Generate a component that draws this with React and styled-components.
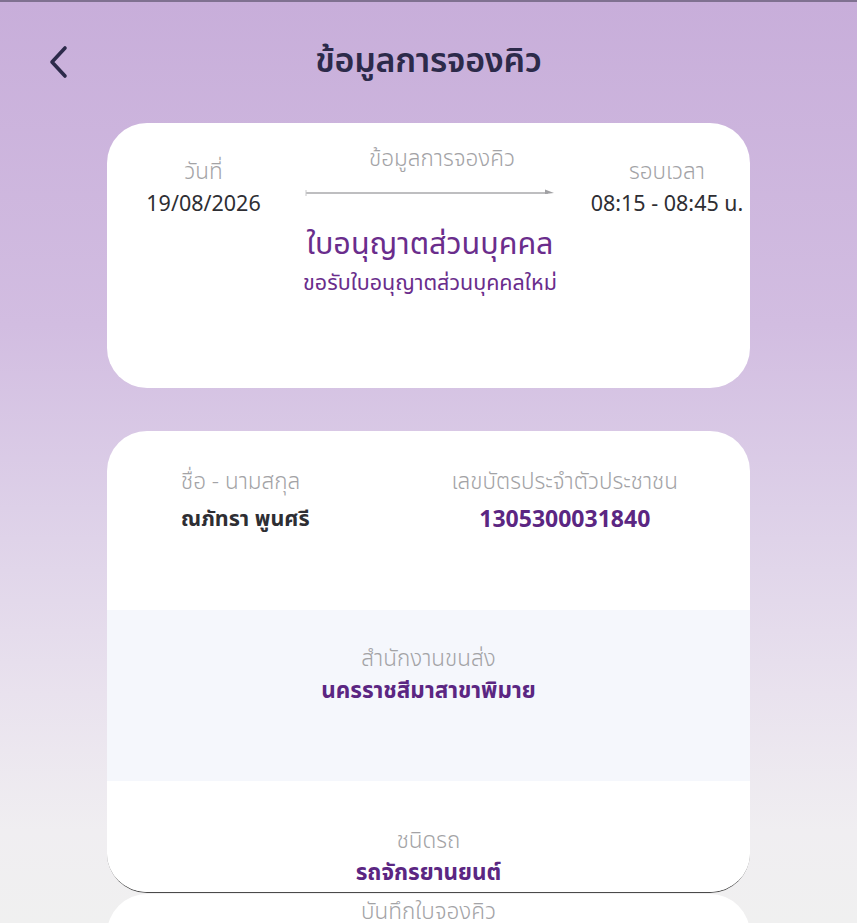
import React from "react";
import styled, { createGlobalStyle } from "styled-components";

const GlobalStyle = createGlobalStyle`
  html, body {
    margin: 0;
    padding: 0;
    background: #f0f0f0;
  }
  body {
    font-family: "Noto Sans Thai", "Noto Sans", "Liberation Sans", sans-serif;
  }
  * { box-sizing: border-box; }
`;

const Page = styled.div`
  min-height: 923px;
  height: 923px;
  overflow: hidden;
  border-top: 2px solid #7f7190;
  background: linear-gradient(
    180deg,
    #c8aeda 0%,
    #d2bde1 35%,
    #ddd0e8 55%,
    #e9e2ee 75%,
    #f0eef1 90%,
    #f0f0f0 100%
  );
`;

const Header = styled.header`
  display: grid;
  grid-template-columns: 1fr auto 1fr;
  align-items: center;
  height: 121px;
  padding: 0 46px;
`;

const BackButton = styled.button`
  width: 30px;
  height: 36px;
  padding: 0;
  border: none;
  background: none;
  display: flex;
  align-items: center;
  margin-top: -2px;
  cursor: pointer;
`;

const Title = styled.h1`
  margin: 0 0 2px;
  font-size: 34px;
  font-weight: 600;
  color: #2c2a4a;
  letter-spacing: -0.3px;
  line-height: 44px;
`;

const Cards = styled.div`
  display: flex;
  flex-direction: column;
  gap: 43px;
  padding: 0 107px;
`;

const Card = styled.section`
  background: #fff;
  border-radius: 40px;
  overflow: hidden;
`;

const SummaryCard = styled(Card)`
  height: 265px;
  display: grid;
  grid-template-columns: 193px 260px 1fr;
`;

const Side = styled.div`
  display: flex;
  flex-direction: column;
  align-items: center;
  padding-top: 35px;
  padding-left: ${(p) => p.$shift || 0}px;
`;

const Label = styled.div`
  font-size: 22.5px;
  color: #a3a3a6;
  font-weight: 300;
  line-height: 28px;
  white-space: nowrap;
`;

const Plain = styled.div`
  margin-top: 5px;
  font-size: 21.5px;
  color: #2e2e33;
  line-height: 28px;
  white-space: nowrap;
`;

const Middle = styled.div`
  display: flex;
  flex-direction: column;
  align-items: center;
  padding-top: 22px;
`;

const Heading = styled(Label)`
  padding-left: 24px;
`;

const Arrow = styled.svg`
  display: block;
  margin-top: 15px;
`;

const BigTitle = styled.div`
  margin-top: 28px;
  font-size: 30.5px;
  color: #6a2d8c;
  line-height: 38px;
  white-space: nowrap;
`;

const SubTitle = styled.div`
  margin-top: 6px;
  font-size: 21.5px;
  color: #6a2d8c;
  line-height: 28px;
  white-space: nowrap;
`;

const DetailCard = styled(Card)`
  border-bottom: 1px solid #4a4a4a;
`;

const PersonRow = styled.div`
  height: 179px;
  display: grid;
  grid-template-columns: 1fr auto;
  padding: 37px 72px 0 74px;
`;

const Field = styled.div`
  display: flex;
  flex-direction: column;
  align-items: ${(p) => (p.$center ? "center" : "flex-start")};
`;

const Strong = styled.div`
  margin-top: 10px;
  font-size: ${(p) => p.$size || 22.5}px;
  font-weight: 700;
  line-height: 28px;
  color: ${(p) => (p.$purple ? "#5b2682" : "#2e2e33")};
  white-space: nowrap;
`;

const Band = styled.div`
  height: ${(p) => p.$h}px;
  padding-top: ${(p) => p.$pad}px;
  background: ${(p) => (p.$tint ? "#f5f7fc" : "#fff")};
  display: flex;
  flex-direction: column;
  align-items: center;
`;

const TightStrong = styled(Strong)`
  margin-top: 4px;
`;

const NextCard = styled(Card)`
  height: 120px;
  margin-top: -42px;
  display: flex;
  justify-content: center;
  padding-top: 4px;
`;

export default function App() {
  return (
    <>
      <GlobalStyle />
      <Page>
        <Header>
          <BackButton aria-label="back">
            <svg width="24" height="34" viewBox="0 0 24 34">
              <polyline
                points="19,3 6,17 19,31"
                fill="none"
                stroke="#2c2a4a"
                strokeWidth="3.6"
                strokeLinecap="round"
                strokeLinejoin="round"
              />
            </svg>
          </BackButton>
          <Title>ข้อมูลการจองคิว</Title>
          <div />
        </Header>

        <Cards>
          <SummaryCard>
            <Side>
              <Label>วันที่</Label>
              <Plain>19/08/2026</Plain>
            </Side>
            <Middle>
              <Heading>ข้อมูลการจองคิว</Heading>
              <Arrow width="250" height="10" viewBox="0 0 250 10">
                <line x1="1" y1="5" x2="243" y2="5" stroke="#a8a8ab" strokeWidth="1.3" />
                <line x1="1" y1="2" x2="1" y2="8" stroke="#c8c8ca" strokeWidth="1" />
                <polygon points="240,1.5 249,5 240,6" fill="#a0a0a3" />
              </Arrow>
              <BigTitle>ใบอนุญาตส่วนบุคคล</BigTitle>
              <SubTitle>ขอรับใบอนุญาตส่วนบุคคลใหม่</SubTitle>
            </Middle>
            <Side $shift={24}>
              <Label>รอบเวลา</Label>
              <Plain>08:15 - 08:45 น.</Plain>
            </Side>
          </SummaryCard>

          <DetailCard>
            <PersonRow>
              <Field>
                <Label>ชื่อ - นามสกุล</Label>
                <Strong $size={21.5}>ณภัทรา พูนศรี</Strong>
              </Field>
              <Field $center>
                <Label>เลขบัตรประจำตัวประชาชน</Label>
                <Strong $purple $size={23}>1305300031840</Strong>
              </Field>
            </PersonRow>
            <Band $tint $h={171} $pad={35}>
              <Label>สำนักงานขนส่ง</Label>
              <TightStrong $purple>นครราชสีมาสาขาพิมาย</TightStrong>
            </Band>
            <Band $h={111} $pad={46}>
              <Label>ชนิดรถ</Label>
              <TightStrong $purple>รถจักรยานยนต์</TightStrong>
            </Band>
          </DetailCard>

          <NextCard>
            <Label>บันทึกใบจองคิว</Label>
          </NextCard>
        </Cards>
      </Page>
    </>
  );
}
